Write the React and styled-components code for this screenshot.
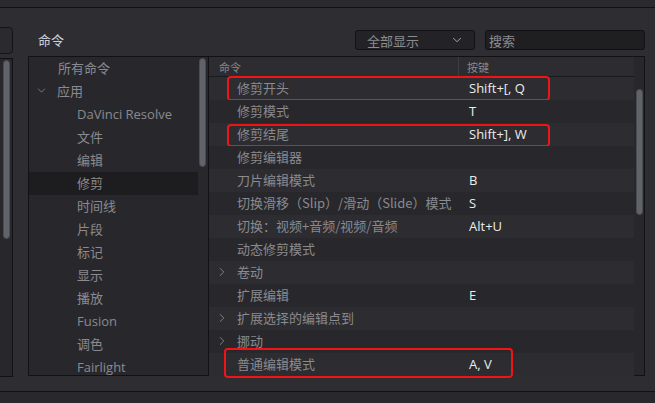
import React from "react";
import styled, { createGlobalStyle } from "styled-components";
import { ChevronDown, ChevronRight } from "lucide-react";

const GlobalStyle = createGlobalStyle`
  html, body {
    margin: 0;
    padding: 0;
    background: #2a2a2f;
  }
  body {
    font-family: "Open Sans", "Noto Sans CJK SC", sans-serif;
  }
`;

const Frame = styled.div`
  width: 655px;
  height: 403px;
  display: flex;
  flex-direction: column;
  background: #2a2a2f;
  overflow: hidden;
`;

const TopStrip = styled.div`
  height: 7px;
  flex: none;
  background: #2a2a2f;
  border-bottom: 1px solid #121214;
`;

const Main = styled.div`
  height: 383px;
  flex: none;
  display: flex;
  background: #2d2d32;
  border-bottom: 1px solid #121214;
`;

const Stub = styled.div`
  width: 13px;
  flex: none;
  display: flex;
  flex-direction: column;
  padding-top: 19px;
  box-sizing: border-box;
`;

const StubBox = styled.div`
  height: 25px;
  margin-left: -20px;
  border: 1px solid #141416;
  border-radius: 4px;
  background: #2a2a2f;
`;

const StubList = styled.div`
  margin-top: 4px;
  height: 319px;
  background: #28282c;
  border-right: 1px solid #121214;
  border-top: 1px solid #121214;
  border-bottom: 1px solid #121214;
  padding: 1px 0 0 3px;
  box-sizing: border-box;
`;

const Content = styled.div`
  flex: 1;
  min-width: 0;
  display: flex;
  flex-direction: column;
  padding: 0 10px 0 15px;
`;

const Header = styled.div`
  height: 48px;
  display: flex;
  align-items: flex-end;
  padding-bottom: 6px;
  box-sizing: border-box;
`;

const Title = styled.div`
  padding-left: 10px;
  color: #cdd1da;
  font-size: 13px;
  line-height: 20px;
  font-family: "Noto Sans CJK SC", sans-serif;
  margin-right: auto;
`;

const Select = styled.div`
  width: 120px;
  height: 20px;
  box-sizing: border-box;
  background: #232327;
  border: 1px solid #121214;
  border-radius: 3px;
  display: flex;
  align-items: center;
  justify-content: space-between;
  padding: 0 10px 0 11px;
  color: #8b8b90;
  font-size: 13px;
  font-family: "Noto Sans CJK SC", sans-serif;
  margin-right: 10px;
`;

const Search = styled.div`
  width: 160px;
  height: 20px;
  box-sizing: border-box;
  background: #1f1f22;
  border: 1px solid #121214;
  border-radius: 3px;
  display: flex;
  align-items: center;
  padding-left: 3px;
  color: #8b8b90;
  font-size: 13px;
  font-family: "Noto Sans CJK SC", sans-serif;
`;

const Body = styled.div`
  display: flex;
  height: 320px;
`;

const ListBox = styled.div`
  width: 180px;
  flex: none;
  box-sizing: border-box;
  border: 1px solid #121214;
  border-right: none;
  background: #28282c;
  display: flex;
  overflow: hidden;
`;

const ListItems = styled.div`
  flex: 1;
`;

const ListRow = styled.div`
  height: 23px;
  box-sizing: border-box;
  padding-bottom: 2px;
  display: flex;
  align-items: center;
  padding-left: ${(p) => p.indent}px;
  background: ${(p) => (p.selected ? "#1d1d20" : "transparent")};
  color: #8a8a8f;
  font-size: 13px;
  white-space: nowrap;
`;

const Toggle = styled.span`
  width: 22px;
  display: flex;
  align-items: center;
  color: #8a8a8f;
`;

const Scroll = styled.div`
  width: 7px;
  height: ${(p) => p.h}px;
  margin: ${(p) => p.m};
  border-radius: 4px;
  background: #60636a;
  border: 1px solid #4a4c52;
  box-sizing: border-box;
  flex: none;
`;

const Table = styled.div`
  flex: 1;
  box-sizing: border-box;
  border: 1px solid #121214;
  background: #28282c;
  display: flex;
`;

const TableMain = styled.div`
  width: 425px;
  display: flex;
  flex-direction: column;
`;

const HeadRow = styled.div`
  height: 20px;
  display: flex;
  align-items: center;
  background: #2c2c31;
  border-bottom: 1px solid #1a1a1d;
  font-size: 11px;
  color: #88888d;
  font-family: "Noto Sans CJK SC", sans-serif;
`;

const HeadCell = styled.div`
  width: ${(p) => p.w}px;
  height: 100%;
  display: flex;
  align-items: center;
  padding-left: ${(p) => p.pad}px;
  box-sizing: border-box;
  border-right: ${(p) => (p.divider ? "1px solid #3c3c42" : "none")};
`;

const Rows = styled.div`
  height: 298px;
`;

const Row = styled.div`
  position: relative;
  height: 23px;
  box-sizing: border-box;
  padding-bottom: 2px;
  display: flex;
  align-items: center;
  background: ${(p) => (p.alt ? "#2c2c31" : "#28282c")};
  font-size: 13px;

  ${(p) =>
    p.mark &&
    `&::after {
      content: "";
      position: absolute;
      left: ${p.mark.left}px;
      top: ${p.mark.top}px;
      width: ${p.mark.width}px;
      height: ${p.mark.height}px;
      border: 2.5px solid #f01414;
      border-radius: 4px;
      box-sizing: border-box;
      pointer-events: none;
    }`}
`;

const CmdCell = styled.div`
  width: 250px;
  display: flex;
  align-items: center;
  color: #8a8a8f;
  white-space: nowrap;
  font-family: "Noto Sans CJK SC", sans-serif;
`;

const Expander = styled.span`
  width: 28px;
  display: flex;
  align-items: center;
  padding-left: 6px;
  box-sizing: border-box;
  color: #8a8a8f;
`;

const KeyCell = styled.div`
  padding-left: 10px;
  color: #ececec;
  font-family: "Open Sans", sans-serif;
`;

const ScrollTrack = styled.div`
  flex: 1;
  display: flex;
  justify-content: center;
`;

const Footer = styled.div`
  flex: 1;
  background: #28282d;
`;

const categories = [
  { label: "所有命令", indent: 29 },
  { label: "应用", indent: 6, open: true },
  { label: "DaVinci Resolve", indent: 48 },
  { label: "文件", indent: 48 },
  { label: "编辑", indent: 48 },
  { label: "修剪", indent: 48, selected: true },
  { label: "时间线", indent: 48 },
  { label: "片段", indent: 48 },
  { label: "标记", indent: 48 },
  { label: "显示", indent: 48 },
  { label: "播放", indent: 48 },
  { label: "Fusion", indent: 48 },
  { label: "调色", indent: 48 },
  { label: "Fairlight", indent: 48 },
];

const commands = [
  { name: "修剪开头", key: "Shift+[, Q", mark: { left: 18, top: -1, width: 323, height: 25 } },
  { name: "修剪模式", key: "T" },
  { name: "修剪结尾", key: "Shift+], W", mark: { left: 18, top: 1, width: 323, height: 23 } },
  { name: "修剪编辑器", key: "" },
  { name: "刀片编辑模式", key: "B" },
  { name: "切换滑移（Slip）/滑动（Slide）模式", key: "S" },
  { name: "切换：视频+音频/视频/音频", key: "Alt+U" },
  { name: "动态修剪模式", key: "" },
  { name: "卷动", key: "", group: true },
  { name: "扩展编辑", key: "E" },
  { name: "扩展选择的编辑点到", key: "", group: true },
  { name: "挪动", key: "", group: true },
  { name: "普通编辑模式", key: "A, V", mark: { left: 15, top: -5, width: 289, height: 30 } },
];

export default function App() {
  return (
    <>
      <GlobalStyle />
      <Frame>
        <TopStrip />
        <Main>
          <Stub>
            <StubBox />
            <StubList>
              <Scroll h={179} m="0" />
            </StubList>
          </Stub>
          <Content>
            <Header>
              <Title>命令</Title>
              <Select>
                <span>全部显示</span>
                <ChevronDown size={14} strokeWidth={1.6} color="#b0b0b5" />
              </Select>
              <Search>搜索</Search>
            </Header>
            <Body>
              <ListBox>
                <ListItems>
                  {categories.map((c) => (
                    <ListRow key={c.label} indent={c.indent} selected={c.selected}>
                      {c.open && (
                        <Toggle>
                          <ChevronDown size={13} strokeWidth={1.5} />
                        </Toggle>
                      )}
                      {c.label}
                    </ListRow>
                  ))}
                </ListItems>
                <Scroll h={109} m="1px 2px 0 1px" />
              </ListBox>
              <Table>
                <TableMain>
                  <HeadRow>
                    <HeadCell w={250} pad={10} divider>
                      命令
                    </HeadCell>
                    <HeadCell w={175} pad={8}>
                      按键
                    </HeadCell>
                  </HeadRow>
                  <Rows>
                    {commands.map((c, i) => (
                      <Row key={c.name} alt={i % 2 === 0} mark={c.mark}>
                        <CmdCell>
                          <Expander>
                            {c.group && <ChevronRight size={14} strokeWidth={1.5} />}
                          </Expander>
                          {c.name}
                        </CmdCell>
                        <KeyCell>{c.key}</KeyCell>
                      </Row>
                    ))}
                  </Rows>
                </TableMain>
                <ScrollTrack>
                  <Scroll h={126} m="32px 0 0 0" />
                </ScrollTrack>
              </Table>
            </Body>
          </Content>
        </Main>
        <Footer />
      </Frame>
    </>
  );
}
